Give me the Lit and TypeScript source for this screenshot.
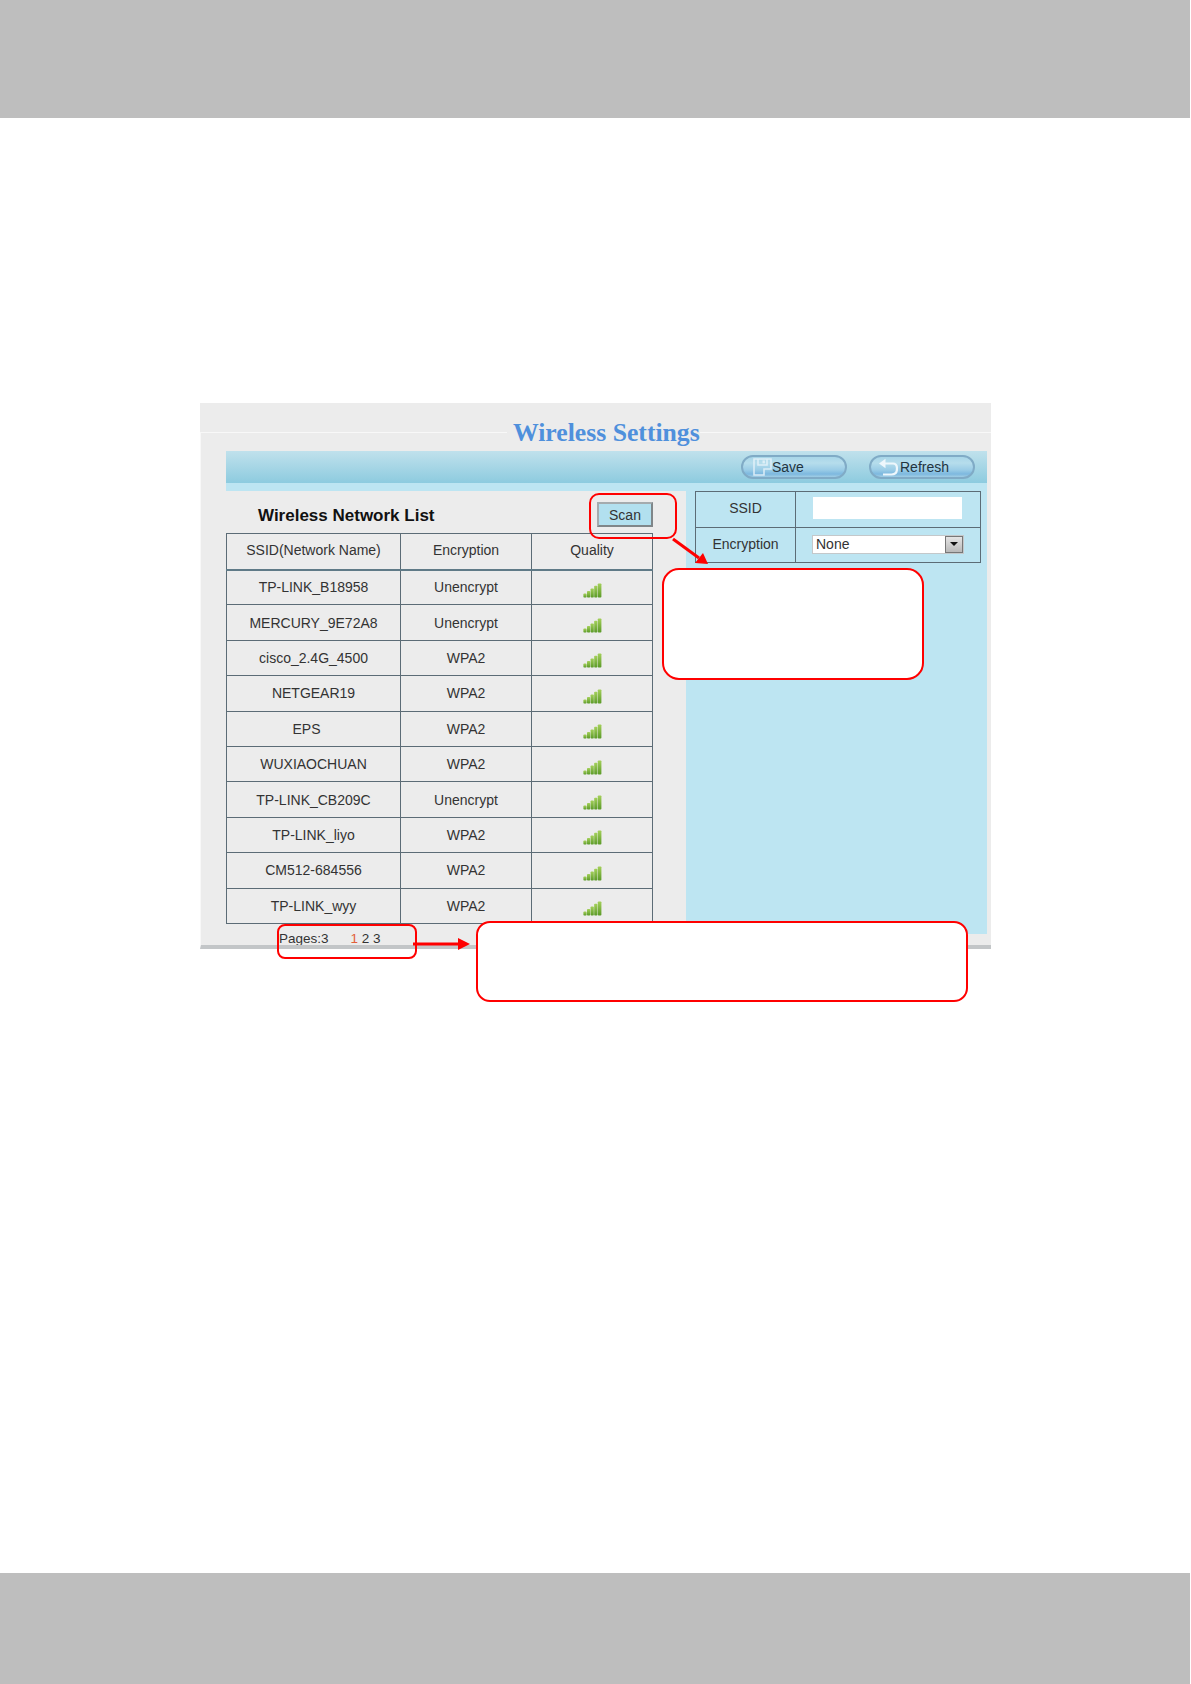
import { LitElement, html, css, svg } from "lit";
import { customElement } from "lit/decorators.js";

const rows: [string, string, boolean?][] = [
  ["TP-LINK_B18958", "Unencrypt"],
  ["MERCURY_9E72A8", "Unencrypt"],
  ["cisco_2.4G_4500", "WPA2"],
  ["NETGEAR19", "WPA2"],
  ["EPS", "WPA2", true],
  ["WUXIAOCHUAN", "WPA2"],
  ["TP-LINK_CB209C", "Unencrypt"],
  ["TP-LINK_liyo", "WPA2"],
  ["CM512-684556", "WPA2"],
  ["TP-LINK_wyy", "WPA2"],
];

const signal = html`<svg class="signal" width="19" height="15" viewBox="0 0 19 15">
  <defs><linearGradient id="g" x1="0" y1="0" x2="0" y2="1"><stop offset="0" stop-color="#a4d05a"/><stop offset="1" stop-color="#5b9a28"/></linearGradient></defs>
  <rect x="0.4" y="10.6" width="3.2" height="4" rx="0.8" fill="url(#g)"/>
  <rect x="4" y="8" width="3.2" height="6.6" rx="0.8" fill="url(#g)"/>
  <rect x="7.6" y="5.4" width="3.2" height="9.2" rx="0.8" fill="url(#g)"/>
  <rect x="11.2" y="2.8" width="3.2" height="11.8" rx="0.8" fill="url(#g)"/>
  <rect x="14.8" y="0.4" width="3.6" height="14.2" rx="0.8" fill="url(#g)"/>
</svg>`;

const floppy = html`<svg class="ico soft" width="19" height="18" viewBox="0 0 19 18" fill="none" stroke="#e6f3fa" stroke-width="1.6">
  <path d="M1 1H18V11H17L17 11H11V17H1Z"/>
  <path d="M5 1V7H14V1"/>
  <rect x="9.5" y="2.4" width="2.4" height="3" fill="#e6f3fa" stroke="none"/>
</svg>`;

const refresh = html`<svg class="ico" width="20" height="18" viewBox="0 0 20 18" fill="none">
  <path d="M6 5.5H15C18 5.5 19 8 19 10.5C19 14 17 16.5 13.5 16.5H5" stroke="#eef7fc" stroke-width="2.2"/>
  <path d="M7.5 0.8V10.2L1 5.5Z" fill="#eef7fc"/>
</svg>`;

@customElement("app-root")
export class AppRoot extends LitElement {
  static styles = css`
    :host {
      display: block;
      position: relative;
      background: #fff;
      font-family: "Liberation Sans", Arial, sans-serif;
      color: #333;
      font-size: 14px;
    }
    .band {
      width: 1190px;
      height: 118px;
      background: #bebebe;
    }
    .band.bottom {
      height: 111px;
      margin-top: 624px;
    }
    .shot {
      margin: 285px 0 0 200px;
      width: 791px;
      padding-top: 14px;
      background: #ececec;
    }
    fieldset {
      box-sizing: border-box;
      display: block;
      width: 791px;
      margin: 0;
      padding: 4px 4px 11px 25px;
      border: 0 solid #f8f8f8;
      border-top-width: 1px;
      border-left-width: 1px;
      border-bottom: 4px solid #c3c6c8;
      background: #ececec;
      overflow: hidden;
    }
    legend {
      box-sizing: border-box;
      width: 193px;
      height: 30px;
      margin-left: 281px;
      padding: 0 0 0 6px;
      font: bold 25.7px/32px "Liberation Serif", "Times New Roman", serif;
      color: #4f90dc;
      white-space: nowrap;
    }
    .toolbar {
      display: flex;
      justify-content: flex-end;
      align-items: center;
      gap: 22px;
      height: 32px;
      padding-right: 12px;
      background: linear-gradient(#c0e1ec, #8dcbdf);
    }
    .pill {
      box-sizing: border-box;
      width: 106px;
      height: 24px;
      display: flex;
      align-items: center;
      padding-left: 10px;
      border: 2px solid #80abc6;
      border-radius: 12px;
      background: linear-gradient(#a8d6e8 0%, #b6ddec 30%, #9acce6 65%, #7db8df 85%, #a0cde4 100%);
      color: #23343f;
      font-size: 14px;
    }
    .pill.refresh {
      padding-left: 7px;
    }
    .pill.refresh .ico {
      margin-right: 2px;
    }
    .ico {
      flex: none;
    }
    .soft {
      opacity: 0.85;
    }
    .body {
      display: grid;
      grid-template-columns: 460px 301px;
      height: 451px;
      background: #bde5f2;
    }
    .left {
      margin-top: 8px;
      background: #ececec;
      height: 443px;
    }
    .list-head {
      box-sizing: border-box;
      height: 42px;
      padding: 11px 33px 0 32px;
      display: flex;
      justify-content: space-between;
      align-items: flex-start;
    }
    .list-title {
      margin-top: 4px;
      font: bold 17px/20px "Liberation Sans", Arial, sans-serif;
      color: #111;
    }
    .scan {
      box-sizing: border-box;
      width: 56px;
      height: 25px;
      text-align: center;
      line-height: 23px;
      background: #b2e0ef;
      border: 2px solid;
      border-color: #a4abae #7f8689 #7f8689 #a4abae;
      font-size: 14px;
      color: #333;
    }
    table {
      border-collapse: collapse;
      table-layout: fixed;
    }
    td,
    th {
      box-sizing: border-box;
      border: 1px solid #5c6c76;
      padding: 0;
      text-align: center;
      font-weight: normal;
      font-size: 14px;
      color: #333;
    }
    .list {
      width: 426px;
    }
    .list th {
      height: 36px;
      padding-bottom: 2px;
      border-bottom: 2px solid #5f7a87;
    }
    .list td {
      height: 35.4px;
    }
    .list td.q {
      padding: 6px 0 0;
    }
    .c1 { width: 174px; }
    .c2 { width: 131px; }
    .c3 { width: 121px; }
    .shift {
      padding-right: 14px !important;
    }
    .signal {
      display: block;
      margin: 0 auto;
    }
    .pages {
      padding: 6px 0 0 53px;
      font-size: 13.5px;
      line-height: 18px;
      height: 16px;
      white-space: nowrap;
    }
    .pages .gap {
      margin-left: 22px;
    }
    .pages .cur {
      color: #e2603a;
    }
    .right {
      padding: 8px 0 0 9px;
    }
    .form {
      width: 285px;
    }
    .form td {
      height: 35.5px;
    }
    .form .k {
      width: 100px;
      padding-bottom: 2px;
    }
    .form .v { width: 185px; }
    .form input {
      display: block;
      box-sizing: border-box;
      width: 149px;
      height: 22px;
      margin: 0 0 2px 17px;
      border: 0;
      padding: 0;
      background: #fff;
    }
    .select {
      box-sizing: border-box;
      width: 152px;
      height: 19px;
      margin: 0 0 1px 16px;
      display: flex;
      justify-content: space-between;
      align-items: center;
      border: 1px solid #c4c8ca;
      background: #fff;
      padding-left: 3px;
      text-align: left;
      line-height: 17px;
    }
    .arrow {
      box-sizing: border-box;
      width: 18px;
      height: 17px;
      display: flex;
      justify-content: center;
      align-items: center;
      background: linear-gradient(#e4e4e4, #b9b9b9);
      border: 1px solid #777;
    }
    .arrow i {
      width: 0;
      height: 0;
      border: 4px solid transparent;
      border-top: 4px solid #111;
      border-bottom: 0;
    }
    .note {
      position: absolute;
      box-sizing: border-box;
      border: 2px solid #f00;
    }
    .white { background: #fff; }
    .n-scan { left: 589px; top: 493px; width: 88px; height: 46px; border-radius: 10px; }
    .n-pages { left: 277px; top: 924px; width: 140px; height: 35px; border-radius: 8px; }
    .n-one { left: 662px; top: 568px; width: 262px; height: 112px; border-radius: 17px; }
    .n-two { left: 476px; top: 921px; width: 492px; height: 81px; border-radius: 14px; }
    .arrows {
      position: absolute;
      left: 0;
      top: 0;
      pointer-events: none;
    }
  `;

  render() {
    return html`
      <div class="band"></div>
      <div class="shot">
        <fieldset>
          <legend>Wireless Settings</legend>
          <div class="toolbar">
            <div class="pill">${floppy}<span>Save</span></div>
            <div class="pill refresh">${refresh}<span>Refresh</span></div>
          </div>
          <div class="body">
            <div class="left">
              <div class="list-head">
                <div class="list-title">Wireless Network List</div>
                <div class="scan">Scan</div>
              </div>
              <table class="list">
                <colgroup><col class="c1" /><col class="c2" /><col class="c3" /></colgroup>
                <tr><th>SSID(Network Name)</th><th>Encryption</th><th>Quality</th></tr>
                ${rows.map(
                  ([n, e, s]) => html`<tr>
                    <td class=${s ? "shift" : ""}>${n}</td>
                    <td>${e}</td>
                    <td class="q">${signal}</td>
                  </tr>`
                )}
              </table>
              <div class="pages">Pages:3<span class="gap cur">1</span> 2 3</div>
            </div>
            <div class="right">
              <table class="form">
                <tr><td class="k">SSID</td><td class="v"><input type="text" /></td></tr>
                <tr>
                  <td class="k">Encryption</td>
                  <td class="v"><div class="select"><span>None</span><span class="arrow"><i></i></span></div></td>
                </tr>
              </table>
            </div>
          </div>
        </fieldset>
      </div>
      <div class="band bottom"></div>
      <div class="note n-scan"></div>
      <div class="note n-pages"></div>
      <div class="note white n-one"></div>
      <div class="note white n-two"></div>
      <svg class="arrows" width="1191" height="1684">
        ${svg`<path d="M673 539L699 558" stroke="#f00" stroke-width="3" fill="none"/>
        <path d="M708 564L695 563L703 553Z" fill="#f00"/>
        <path d="M413 944H460" stroke="#f00" stroke-width="3" fill="none"/>
        <path d="M470 944L458 938V950Z" fill="#f00"/>`}
      </svg>
    `;
  }
}
